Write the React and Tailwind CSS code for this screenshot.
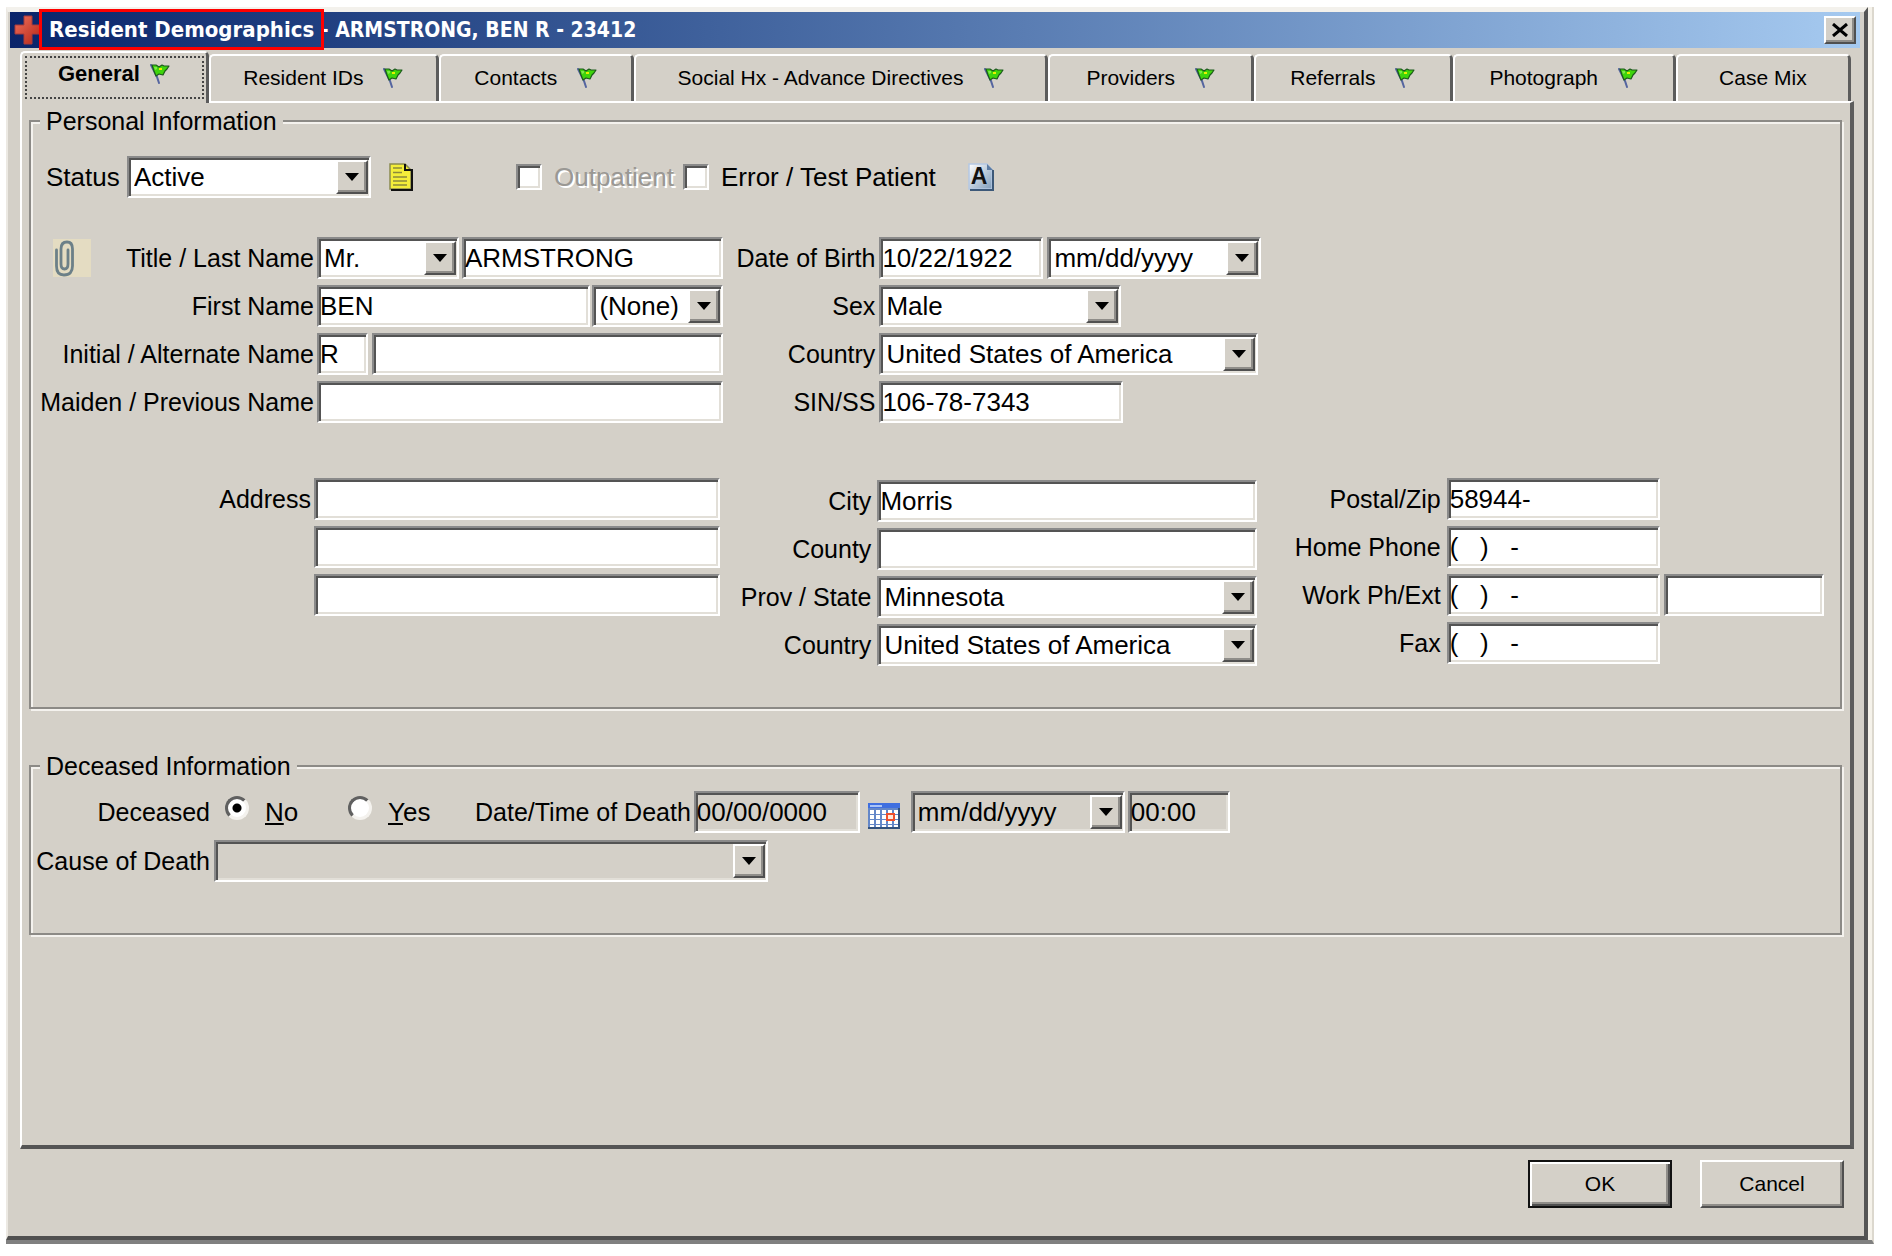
import { useState } from 'react';
import clsx from 'clsx';

const sunken =
    'border-2 border-t-[#8a8a8a] border-l-[#8a8a8a] border-r-white border-b-white shadow-[inset_2px_2px_0_#545454,inset_-2px_-2px_0_#e2dfd8]';
const raised =
    'border-2 border-t-white border-l-white border-r-[#505050] border-b-[#505050] shadow-[inset_-2px_-2px_0_#8f8d89]';

const tabs = [
    { id: 'general', label: 'General', flag: true, size: 'flex-[188_1_0%]' },
    { id: 'ids', label: 'Resident IDs', flag: true, size: 'flex-[230_1_0%]' },
    { id: 'contacts', label: 'Contacts', flag: true, size: 'flex-[194_1_0%]' },
    { id: 'social', label: 'Social Hx - Advance Directives', flag: true, size: 'flex-[419_1_0%]' },
    { id: 'providers', label: 'Providers', flag: true, size: 'flex-[205_1_0%]' },
    { id: 'referrals', label: 'Referrals', flag: true, size: 'flex-[198_1_0%]' },
    { id: 'photograph', label: 'Photograph', flag: true, size: 'flex-[223_1_0%]' },
    { id: 'casemix', label: 'Case Mix', flag: false, size: 'flex-[174_1_0%]' },
];

const FlagIcon = () => (
    <svg viewBox="0 0 20 20" className="w-5 h-5 shrink-0" aria-hidden="true">
        <path d="M1 1 L4 7 L7 13 L9 19" fill="none" stroke="#5565a0" strokeWidth="2" strokeLinecap="round" />
        <path d="M2 1 L6 1 L9 3 L12 1 L14 2 L19 2 L17 5 L15 7 L13 11 L9 10 L6 12 L4 7 Z" fill="#3fd40c" stroke="#1c5a1c" strokeWidth="1.2" strokeLinejoin="round" />
        <path d="M4 3 L7 3 L7 5 L5 6 Z" fill="#7be84a" />
        <path d="M9 4 h3 v2 h-3 Z" fill="#e8f000" />
    </svg>
);

const CrossIcon = () => (
    <svg viewBox="0 0 28 30" className="w-7 h-[30px] shrink-0" aria-hidden="true">
        <defs>
            <linearGradient id="cross" x1="0" y1="0" x2="1" y2="1">
                <stop offset="0" stopColor="#f0705c" />
                <stop offset="1" stopColor="#b32414" />
            </linearGradient>
        </defs>
        <path d="M10 1 h8 v9 h9 v9 h-9 v10 h-8 v-10 h-9 v-9 h9 Z" fill="url(#cross)" stroke="#a83a3a" strokeWidth="1" />
    </svg>
);

const NoteIcon = () => (
    <svg viewBox="0 0 24 28" className="w-6 h-7" aria-hidden="true">
        <path d="M1 1 H16 L22 7 V26 H1 Z" fill="#f4ee3a" stroke="#8a8a50" strokeWidth="1.5" />
        <path d="M16 1 V7 H22 M23 6 V27 H2" fill="none" stroke="#111" strokeWidth="2" />
        <path d="M4 5 H13 M4 9.5 H13 M4 14 H18 M4 18 H18 M4 22 H18" stroke="#8c8a3c" strokeWidth="1.7" />
    </svg>
);

const LetterIcon = () => (
    <svg viewBox="0 0 26 28" className="w-[26px] h-7" aria-hidden="true">
        <defs>
            <linearGradient id="sheet" x1="0" y1="0" x2="1" y2="1">
                <stop offset="0" stopColor="#ffffff" />
                <stop offset="1" stopColor="#7f9cba" />
            </linearGradient>
        </defs>
        <path d="M1 1 H19 L24 7 V26 H1 Z" fill="url(#sheet)" stroke="#b4c8e4" strokeWidth="1.5" />
        <path d="M25 7 V27 H2" fill="none" stroke="#3c5878" strokeWidth="2" />
        <path d="M19 1 V7 H25 Z" fill="#5c7ca4" />
        <text x="11" y="21" textAnchor="middle" fontFamily="Liberation Sans, sans-serif" fontWeight="bold" fontSize="23" fill="#111">A</text>
    </svg>
);

const PaperclipIcon = () => (
    <svg viewBox="0 0 38 38" className="w-[38px] h-[38px] bg-[#e4dcc2]" aria-hidden="true">
        <path
            d="M3.500 11 V27 Q3.500 36 11 36 Q19.500 36 19.500 27 V10 Q19.500 3 14 3 Q8 3 8 10 V25 Q8 30 11.500 30 Q15 30 15 25 V11"
            fill="none"
            stroke="#6c8088"
            strokeWidth="2.800"
            strokeLinecap="round"
        />
    </svg>
);

const CalendarIcon = () => (
    <svg viewBox="0 0 32 26" className="w-8 h-[26px]" aria-hidden="true">
        <rect width="32" height="26" fill="#6487c8" />
        <rect width="32" height="5" fill="#3f6fe0" />
        <path d="M2 3 H14" stroke="#cfe0ff" strokeWidth="1.500" />
        {[7, 12, 17, 22].map(y =>
            [2, 8, 14, 20, 26].map(x => <rect key={`${x}-${y}`} x={x} y={y} width="4" height={y === 22 ? 2 : 4} fill="#fff" />)
        )}
        <rect x="19" y="11" width="7" height="6" fill="#ffe8dc" stroke="#f0502c" strokeWidth="2" />
        <path d="M31 5 V25 H0" fill="none" stroke="#33527e" strokeWidth="2" />
    </svg>
);

const TextBox = ({ className, ...props }) => (
    <input type="text" className={clsx('h-[42px] min-w-0 pl-px bg-white outline-none disabled:bg-[#d4d0c8] disabled:text-black', sunken, className)} {...props} />
);

const SelectBox = ({ options, className, disabled, ...props }) => (
    <div className={clsx('relative h-[42px] min-w-0', className)}>
        <select
            disabled={disabled}
            className={clsx('appearance-none w-full h-full pl-[5px] pr-9 bg-white outline-none disabled:bg-[#d4d0c8] disabled:text-black disabled:opacity-100', sunken)}
            {...props}
        >
            {options.map(o => <option key={o}>{o}</option>)}
        </select>
        <span
            className={clsx(
                'pointer-events-none absolute right-[3px] top-1 bottom-1 w-8 flex items-center justify-center bg-[#d4d0c8]',
                raised,
                !disabled && 'border-t-[#e6e3dd] border-l-[#e6e3dd]'
            )}
        >
            <svg viewBox="0 0 14 8" className="w-3.5 h-2" aria-hidden="true"><path d="M0 0 H14 L7 8 Z" fill="#000" /></svg>
        </span>
    </div>
);

const Row = ({ label, id, width, children }) => (
    <div className="flex items-center h-[42px]">
        {label
            ? <label htmlFor={id} className={clsx('shrink-0 text-right text-[25px] whitespace-nowrap', width)}>{label}</label>
            : <span className={clsx('shrink-0', width)} />}
        {children}
    </div>
);

const Group = ({ title, className, children }) => (
    <fieldset className={clsx('ml-[7px] mr-2 min-w-0 border-2 border-[#8c8a86] shadow-[2px_2px_0_#f4f2ee,inset_2px_2px_0_#f4f2ee]', className)}>
        <legend className="ml-[9px] px-1.5 text-[25px] leading-7 bg-[#d4d0c8]">{title}</legend>
        {children}
    </fieldset>
);

const checkbox = 'appearance-none w-[26px] h-[26px] bg-white';

export default function App() {
    const [tab, setTab] = useState('general');
    const [deceased, setDeceased] = useState('no');

    return (
        <div className="min-h-screen flex flex-col bg-white pt-[7px] pb-3 pl-1.5 pr-[18px] font-['Liberation_Sans',Arial,sans-serif] text-[26px] leading-7 text-black">
            <div className="flex-1 flex flex-col bg-[#f5f2ea] border-r-2 border-b-4 border-r-[#dcd8ce] border-b-[#808080] pr-1">
                <div className="flex-1 flex flex-col bg-[#d4d0c8] border-t-[5px] border-l-2 border-r-4 border-b-4 border-t-[#f3f1ec] border-l-[#ece9e3] border-r-[#555] border-b-[#505050]">
                    <header className="ml-0.5 mr-1 h-9 px-1 flex items-center bg-linear-to-r from-[#0a246a] to-[#a6caf0] text-white font-bold font-['DejaVu_Sans_Condensed','DejaVu_Sans',sans-serif] text-[21px]">
                        <CrossIcon />
                        <h1 className="ml-[7px] flex-1 whitespace-pre">
                            <span className="relative text-[22px]">
                                Resident Demographics
                                <span className="absolute -left-2.5 -right-2.5 -top-2 -bottom-2 border-[3px] border-[#fe0000]" />
                            </span>
                            {' - ARMSTRONG, BEN R - 23412'}
                        </h1>
                        <button type="button" aria-label="Close" className={clsx('w-8 h-7 flex items-center justify-center bg-[#d4d0c8]', raised)}>
                            <svg viewBox="0 0 18 14" className="w-[18px] h-3.5" aria-hidden="true">
                                <path d="M2 1 L16 13 M16 1 L2 13" stroke="#000" strokeWidth="3" />
                            </svg>
                        </button>
                    </header>

                    <div role="tablist" className="mt-[3px] ml-3 mr-[13px] h-[50px] flex items-end text-[21px]">
                        {tabs.map(t => {
                            const active = t.id === tab;
                            return (
                                <button
                                    key={t.id}
                                    type="button"
                                    role="tab"
                                    aria-selected={active}
                                    onClick={() => setTab(t.id)}
                                    className={clsx(
                                        'relative flex items-center justify-center whitespace-nowrap rounded-t-[5px] bg-[#d4d0c8] border-t-2 border-l-2 border-r-[3px] border-t-white border-l-white border-r-[#5c5c5c]',
                                        t.size,
                                        active ? 'z-10 h-[52px] -mb-0.5 pb-2 gap-2.5 font-bold text-[22px]' : 'h-[47px] pb-0.5 gap-5'
                                    )}
                                >
                                    {t.label}
                                    {t.flag && <FlagIcon />}
                                    {active && <span className="absolute left-[3px] right-0.5 top-[3px] bottom-1 border-2 border-dotted border-[#444]" />}
                                </button>
                            );
                        })}
                    </div>

                    <main className="flex-1 ml-3 mr-2.5 pt-1 border-t-2 border-l-2 border-r-4 border-b-4 border-t-white border-l-white border-r-[#5c5c5c] border-b-[#555]">
                        <Group title="Personal Information" className="pt-[21px] pb-[41px]">
                            <div className="flex items-center pl-[15px]">
                                <label htmlFor="status" className="w-[81px]">Status</label>
                                <SelectBox id="status" className="w-[244px]" options={['Active', 'Inactive']} />
                                <button type="button" aria-label="Status notes" className="ml-[18px]"><NoteIcon /></button>
                                <input id="outpatient" type="checkbox" disabled className={clsx('ml-[103px]', checkbox, sunken)} />
                                <label htmlFor="outpatient" className="ml-3 w-[129px] text-[#9a9894] [text-shadow:2px_2px_0_#fff]">Outpatient</label>
                                <input id="testPatient" type="checkbox" className={clsx(checkbox, sunken)} />
                                <label htmlFor="testPatient" className="ml-3">Error / Test Patient</label>
                                <button type="button" aria-label="Alerts" className="ml-8"><LetterIcon /></button>
                            </div>

                            <div className="mt-[39px] grid grid-cols-[692fr_537fr_579fr]">
                                <div className="min-w-0 space-y-1.5">
                                    <div className="flex items-center h-[42px]">
                                        <button type="button" aria-label="Attachments" className="ml-[22px]"><PaperclipIcon /></button>
                                        <label htmlFor="title" className="w-[226px] shrink-0 pr-[3px] text-right text-[25px] whitespace-nowrap">Title / Last Name</label>
                                        <SelectBox id="title" className="w-[142px] shrink-0" options={['Mr.', 'Mrs.', 'Ms.', 'Dr.']} />
                                        <TextBox aria-label="Last Name" defaultValue="ARMSTRONG" className="ml-[3px] flex-1" />
                                    </div>
                                    <Row label="First Name" id="firstName" width="w-[286px] pr-[3px]">
                                        <TextBox id="firstName" defaultValue="BEN" className="flex-1" />
                                        <SelectBox aria-label="Suffix" className="ml-0.5 w-[131px] shrink-0" options={['(None)', 'Jr.', 'Sr.']} />
                                    </Row>
                                    <Row label="Initial / Alternate Name" id="initial" width="w-[286px] pr-[3px]">
                                        <TextBox id="initial" defaultValue="R" className="w-[51px]" />
                                        <TextBox aria-label="Alternate Name" className="ml-1 flex-1" />
                                    </Row>
                                    <Row label="Maiden / Previous Name" id="maiden" width="w-[286px] pr-[3px]">
                                        <TextBox id="maiden" className="flex-1" />
                                    </Row>
                                </div>
                                <div className="min-w-0 space-y-1.5">
                                    <Row label="Date of Birth" id="dob" width="w-[156px] pr-1">
                                        <TextBox id="dob" defaultValue="10/22/1922" className="w-[164px]" />
                                        <SelectBox aria-label="Birth date format" className="ml-1 flex-1" options={['mm/dd/yyyy', 'yyyy']} />
                                    </Row>
                                    <Row label="Sex" id="sex" width="w-[156px] pr-1">
                                        <SelectBox id="sex" className="w-[242px]" options={['Male', 'Female']} />
                                    </Row>
                                    <Row label="Country" id="birthCountry" width="w-[156px] pr-1">
                                        <SelectBox id="birthCountry" className="mr-[3px] flex-1" options={['United States of America', 'Canada']} />
                                    </Row>
                                    <Row label="SIN/SS" id="sin" width="w-[156px] pr-1">
                                        <TextBox id="sin" defaultValue="106-78-7343" className="w-[244px]" />
                                    </Row>
                                </div>
                            </div>

                            <div className="mt-[55px] grid grid-cols-[692fr_537fr_579fr]">
                                <div className="min-w-0 space-y-1.5 pr-[3px]">
                                    <Row label="Address" id="address1" width="w-[283px] pr-[3px]">
                                        <TextBox id="address1" className="flex-1" />
                                    </Row>
                                    <Row width="w-[283px]">
                                        <TextBox aria-label="Address line 2" className="flex-1" />
                                    </Row>
                                    <Row width="w-[283px]">
                                        <TextBox aria-label="Address line 3" className="flex-1" />
                                    </Row>
                                </div>
                                <div className="min-w-0 space-y-1.5 pt-0.5 pr-1">
                                    <Row label="City" id="city" width="w-[154px] pr-1.5">
                                        <TextBox id="city" defaultValue="Morris" className="flex-1" />
                                    </Row>
                                    <Row label="County" id="county" width="w-[154px] pr-1.5">
                                        <TextBox id="county" className="flex-1" />
                                    </Row>
                                    <Row label="Prov / State" id="state" width="w-[154px] pr-1.5">
                                        <SelectBox id="state" className="flex-1" options={['Minnesota', 'North Dakota']} />
                                    </Row>
                                    <Row label="Country" id="country" width="w-[154px] pr-1.5">
                                        <SelectBox id="country" className="flex-1" options={['United States of America', 'Canada']} />
                                    </Row>
                                </div>
                                <div className="min-w-0 space-y-1.5 pr-4">
                                    <Row label="Postal/Zip" id="zip" width="w-[186px] pr-1.5">
                                        <TextBox id="zip" defaultValue="58944-" className="w-[213px]" />
                                    </Row>
                                    <Row label="Home Phone" id="homePhone" width="w-[186px] pr-1.5">
                                        <TextBox id="homePhone" defaultValue="(   )   -" className="w-[213px]" />
                                    </Row>
                                    <Row label="Work Ph/Ext" id="workPhone" width="w-[186px] pr-1.5">
                                        <TextBox id="workPhone" defaultValue="(   )   -" className="w-[213px]" />
                                        <TextBox aria-label="Work Extension" className="ml-1 flex-1" />
                                    </Row>
                                    <Row label="Fax" id="fax" width="w-[186px] pr-1.5">
                                        <TextBox id="fax" defaultValue="(   )   -" className="w-[213px]" />
                                    </Row>
                                </div>
                            </div>
                        </Group>

                        <Group title="Deceased Information" className="mt-[43px] pt-[11px] pb-[51px]">
                            <div className="flex items-center h-[42px]">
                                <span id="deceasedLabel" className="w-[179px] text-right text-[25px]">Deceased</span>
                                <div role="radiogroup" aria-labelledby="deceasedLabel" className="flex items-center">
                                    {[['no', 'N', 'o', 'w-[68px]'], ['yes', 'Y', 'es', 'w-[87px]']].map(([value, key, rest, width]) => (
                                        <div key={value} className="flex items-center">
                                            <input
                                                id={`deceased-${value}`}
                                                type="radio"
                                                name="deceased"
                                                checked={deceased === value}
                                                onChange={() => setDeceased(value)}
                                                className={clsx(
                                                    'appearance-none ml-[15px] mb-2 w-6 h-6 rounded-full border-[3px] border-t-[#606060] border-l-[#606060] border-r-[#f4f2ee] border-b-[#f4f2ee] bg-white',
                                                    'checked:bg-[radial-gradient(circle,#000_4px,#fff_5px)]'
                                                )}
                                            />
                                            <label htmlFor={`deceased-${value}`} className={clsx('ml-4', width)}>
                                                <u className="underline-offset-2 decoration-2">{key}</u>{rest}
                                            </label>
                                        </div>
                                    ))}
                                </div>
                                <label htmlFor="deathDate" className="pr-[3px] text-[25px] whitespace-nowrap">Date/Time of Death</label>
                                <TextBox id="deathDate" disabled defaultValue="00/00/0000" className="w-[166px]" />
                                <button type="button" aria-label="Pick date of death" className="ml-2 mt-2"><CalendarIcon /></button>
                                <SelectBox aria-label="Death date format" disabled className="ml-[11px] w-[214px]" options={['mm/dd/yyyy']} />
                                <TextBox aria-label="Time of Death" disabled defaultValue="00:00" className="ml-[3px] w-[102px]" />
                            </div>
                            <div className="mt-[7px]">
                                <Row label="Cause of Death" id="cause" width="w-[183px] pr-1">
                                    <SelectBox id="cause" disabled className="w-[554px]" options={['']} />
                                </Row>
                            </div>
                        </Group>
                    </main>

                    <footer className="mt-[11px] pb-7 pr-5 flex justify-end gap-7 text-[21px]">
                        <button type="button" className="w-36 h-12 border-2 border-[#111] bg-[#d4d0c8] shadow-[inset_2px_2px_0_#fff,inset_-2px_-2px_0_#505050,inset_-4px_-4px_0_#8f8d89]">OK</button>
                        <button type="button" className={clsx('w-36 h-12 bg-[#d4d0c8]', raised)}>Cancel</button>
                    </footer>
                </div>
            </div>
        </div>
    );
}
